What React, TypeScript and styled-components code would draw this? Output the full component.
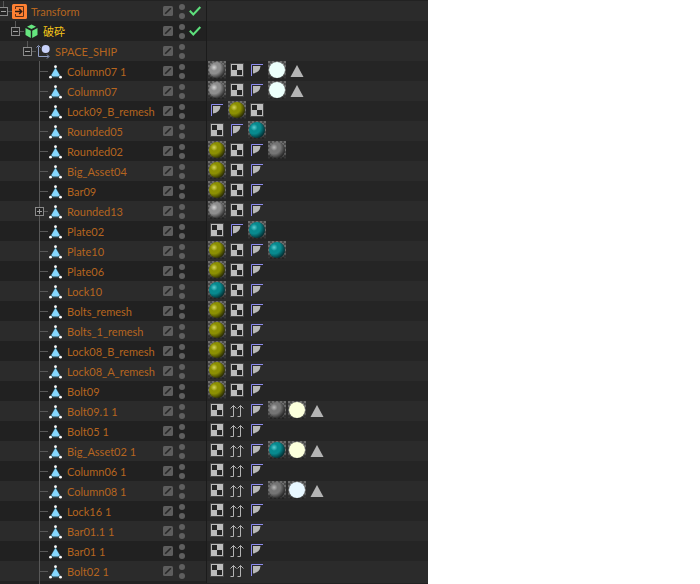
import React from "react";
import styled, { createGlobalStyle } from "styled-components";

const GlobalStyle = createGlobalStyle`
  * { box-sizing: border-box; }
  body { margin: 0; background: #ffffff; }
`;

const Panel = styled.main`
  width: 100%;
  max-width: 428px;
  padding-top: 1px;
  background: #222222;
  color: #b5651f;
  font: 11px/20px Lato, "Noto Sans CJK JP", sans-serif;
  overflow: hidden;
`;

const List = styled.ul`
  margin: 0;
  padding: 0;
  list-style: none;
`;

const Row = styled.li`
  display: grid;
  grid-template-columns: 162px 14px 12px 18px minmax(0, 1fr);
  height: 20px;
  background: #212121;
  &:nth-child(odd) { background: #2b2b2b; }
`;

const NameCell = styled.div<{ $depth: number }>`
  display: flex;
  min-width: 0;
  padding-left: ${(p) => p.$depth * 12}px;
`;

const Branch = styled.span`
  flex: none;
  width: 12px;
  height: 20px;
  svg { display: block; }
`;

const Toggle = styled.button`
  display: block;
  padding: 0;
  border: 0;
  background: none;
`;

const ObjectIcon = styled.span`
  flex: none;
  width: 19px;
  height: 20px;
  svg { display: block; }
`;

const Name = styled.span<{ $active?: boolean }>`
  white-space: nowrap;
  color: ${(p) => (p.$active ? "#f5c518" : "inherit")};
  line-height: 22px;
`;

const IconButton = styled.button`
  display: block;
  padding: 0;
  border: 0;
  background: none;
  height: 20px;
  svg { display: block; }
`;

const StateCell = styled.span`
  svg { display: block; }
`;

const Tags = styled.div<{ $alt: boolean }>`
  display: flex;
  border-left: 1px solid #1b1b1b;
  padding-left: 1px;
  background: ${(p) => (p.$alt ? "#2b2b2b" : "#252525")};
  svg { display: block; flex: none; }
`;

const ListEnd = styled.div`
  height: 3px;
  padding-left: 39px;
  &::before {
    content: "";
    display: block;
    width: 1px;
    height: 3px;
    background: #585858;
  }
`;

const Defs = styled.svg`
  display: block;
`;

const LINE = "#585858";

type BranchKind = "open" | "closed" | "leaf";

function BranchLines({ kind }: { kind: BranchKind }) {
  return (
    <svg width="12" height="20" shapeRendering="crispEdges" overflow="visible">
      {kind === "open" && <path d="M3 0h1v6h-1zM8 10h4v1h-4z" fill={LINE} />}
      {kind !== "open" && <path d="M3 0h1v20h-1z" fill={LINE} />}
      {kind === "leaf" && <path d="M4 10h8v1h-8z" fill={LINE} />}
      {kind === "closed" && <path d="M8 10h4v1h-4z" fill={LINE} />}
      {kind !== "leaf" && (
        <>
          <rect x="-0.5" y="6.5" width="8" height="8" fill="#242424" stroke="#8a8a8a" />
          <path d="M1 10h5v1h-5z" fill="#a0a0a0" />
          {kind === "closed" && <path d="M3 8h1v5h-1z" fill="#a0a0a0" />}
        </>
      )}
    </svg>
  );
}

type IconKind = "transform" | "fracture" | "null" | "polygon";

function ObjectGlyph({ kind }: { kind: IconKind }) {
  return (
    <svg width="19" height="20" overflow="visible">
      {kind === "transform" && (
        <>
          <rect x="0" y="3" width="15" height="15" rx="1.5" fill="#ff8133" />
          <path d="M3.5 8V5.5H11.5V15.5H3.5V13" fill="none" stroke="#5a2f18" />
          <path d="M3 10.5H9.5M7.2 8L9.7 10.5L7.2 13" fill="none" stroke="#2b1a12" strokeWidth="1.4" />
        </>
      )}
      {kind === "fracture" && (
        <g fill="#66e67f">
          <path d="M7.5 3.5L12 5.8L7.5 8.1L3 5.8Z" />
          <path d="M1.5 7L6.8 9.7V17L1.5 14Z" />
          <path d="M13.5 7L8.2 9.7V17L13.5 14Z" />
        </g>
      )}
      {kind === "null" && (
        <>
          <path d="M2.5 5.5V15.5H12.5M0.5 6.5L2.5 4.5L4.5 6.5M11 13.5L13 15.5L11 17.5" fill="none" stroke="#8f9dc4" />
          <circle cx="9.7" cy="8" r="4" fill="#c9d2fb" />
        </>
      )}
      {kind === "polygon" && (
        <>
          <path d="M7.5 6.5L2.5 16H12.5Z" fill="none" stroke="#397080" strokeWidth="0.7" />
          <path d="M7.5 7L11.5 13.8Q11.5 15.5 10 15.5H5Q3.5 15.5 3.5 13.8Z" fill="#86d8ff" />
          <g fill="#ffffff">
            <circle cx="7.5" cy="5.7" r="1.4" />
            <circle cx="2.5" cy="16.2" r="1.4" />
            <circle cx="12.5" cy="16.2" r="1.4" />
          </g>
        </>
      )}
    </svg>
  );
}

const LayerGlyph = () => (
  <svg width="12" height="20">
    <rect x="1" y="5" width="10" height="10" rx="1.5" fill="#5d5d5d" />
    <path d="M3.2 12.8L8.8 7.2" stroke="#262626" strokeWidth="1.6" />
  </svg>
);

const DotsGlyph = () => (
  <svg width="12" height="20" fill="#5f5f5f">
    <circle cx="6" cy="6" r="3" />
    <circle cx="6" cy="15" r="3" />
  </svg>
);

const CheckGlyph = () => (
  <svg width="16" height="20">
    <path d="M1.8 9.8L5.3 13.5L12.3 6" fill="none" stroke="#5de07c" strokeWidth="2" />
  </svg>
);

const spheres: Record<string, [string, string, string]> = {
  g: ["#d6d6d6", "#8e8e8e", "#2c2c2c"],
  d: ["#b8b8b8", "#757575", "#262626"],
  y: ["#d6d65c", "#8c9003", "#2a2c02"],
  t: ["#5ccdd2", "#088a8f", "#022e33"],
};
const glows: Record<string, string> = { w: "#ecfffb", c: "#fbffdc", b: "#e8f7ff" };

function MaterialDefs() {
  return (
    <Defs width="0" height="0" aria-hidden="true">
      <defs>
        <pattern id="backdrop" width="4" height="4" patternUnits="userSpaceOnUse">
          <rect width="4" height="4" fill="#4a4a4a" />
          <path d="M0 0h2v2h-2zM2 2h2v2h-2z" fill="#6c6c6c" />
        </pattern>
        <linearGradient id="floor" x1="0" y1="0" x2="0" y2="1">
          <stop offset="0.6" stopColor="#111" stopOpacity="0" />
          <stop offset="1" stopColor="#111" stopOpacity="0.75" />
        </linearGradient>
        {Object.entries(spheres).map(([key, [light, mid, dark]]) => (
          <radialGradient key={key} id={`ball-${key}`} cx="0.32" cy="0.34" r="0.72">
            <stop offset="0" stopColor={light} />
            <stop offset="0.3" stopColor={mid} />
            <stop offset="0.55" stopColor={mid} />
            <stop offset="1" stopColor={dark} />
          </radialGradient>
        ))}
      </defs>
    </Defs>
  );
}

function Tag({ kind }: { kind: string }) {
  if (kind in spheres || kind in glows) {
    return (
      <svg width="20" height="20">
        <rect width="18" height="18" fill="url(#backdrop)" />
        <rect width="18" height="18" fill="url(#floor)" />
        <circle cx="9" cy="9" r="8" fill={glows[kind] ?? `url(#ball-${kind})`} />
      </svg>
    );
  }
  if (kind === "k") {
    return (
      <svg width="20" height="20" shapeRendering="crispEdges">
        <rect x="2" y="2" width="14" height="14" fill="#444444" />
        <rect x="3" y="3" width="12" height="12" fill="#bdbdbd" />
        <path d="M4 4h5v5h-5zM9 9h5v5h-5z" fill="#242424" />
      </svg>
    );
  }
  if (kind === "p") {
    return (
      <svg width="20" height="20">
        <path d="M3.5 15V3.5H15" fill="none" stroke="#8d8cf0" />
        <path d="M5 5H12.5Q12 11.5 5 12.5Z" fill="#b9b9b9" />
      </svg>
    );
  }
  if (kind === "u") {
    return (
      <svg width="20" height="20" fill="none" stroke="#b4b4b4">
        <path d="M2.5 15.5H5.5V4.5M2.5 7.5L5.5 4.5L8.5 7.5M9.5 15.5H12.5V4.5M9.5 7.5L12.5 4.5L15.5 7.5" />
      </svg>
    );
  }
  return (
    <svg width="20" height="20">
      <path d="M9 4L15.5 16H2.5Z" fill="#b4b4b4" />
    </svg>
  );
}

interface Item {
  name: string;
  tags: string;
  depth?: number;
  icon?: IconKind;
  branch?: BranchKind;
  enabled?: boolean;
  active?: boolean;
}

const items: Item[] = [
  { name: "Transform", tags: "", depth: 0, icon: "transform", branch: "open", enabled: true },
  { name: "破砕", tags: "", depth: 1, icon: "fracture", branch: "open", enabled: true, active: true },
  { name: "SPACE_SHIP", tags: "", depth: 2, icon: "null", branch: "open" },
  { name: "Column07 1", tags: "gkpwa" },
  { name: "Column07", tags: "gkpwa" },
  { name: "Lock09_B_remesh", tags: "pyk" },
  { name: "Rounded05", tags: "kpt" },
  { name: "Rounded02", tags: "ykpd" },
  { name: "Big_Asset04", tags: "ykp" },
  { name: "Bar09", tags: "ykp" },
  { name: "Rounded13", tags: "gkp", branch: "closed" },
  { name: "Plate02", tags: "kpt" },
  { name: "Plate10", tags: "ykpt" },
  { name: "Plate06", tags: "ykp" },
  { name: "Lock10", tags: "tkp" },
  { name: "Bolts_remesh", tags: "ykp" },
  { name: "Bolts_1_remesh", tags: "ykp" },
  { name: "Lock08_B_remesh", tags: "ykp" },
  { name: "Lock08_A_remesh", tags: "ykp" },
  { name: "Bolt09", tags: "ykp" },
  { name: "Bolt09.1 1", tags: "kupdca" },
  { name: "Bolt05 1", tags: "kup" },
  { name: "Big_Asset02 1", tags: "kuptca" },
  { name: "Column06 1", tags: "kup" },
  { name: "Column08 1", tags: "kupdba" },
  { name: "Lock16 1", tags: "kup" },
  { name: "Bar01.1 1", tags: "kup" },
  { name: "Bar01 1", tags: "kup" },
  { name: "Bolt02 1", tags: "kup" },
];

export default function App() {
  return (
    <Panel>
      <GlobalStyle />
      <MaterialDefs />
      <List>
        {items.map(({ name, tags, depth = 3, icon = "polygon", branch = "leaf", enabled, active }, index) => (
          <Row key={name}>
            <NameCell $depth={depth}>
              <Branch>
                {branch === "leaf" ? (
                  <BranchLines kind={branch} />
                ) : (
                  <Toggle aria-label={`Toggle ${name}`} aria-expanded={branch === "open"}>
                    <BranchLines kind={branch} />
                  </Toggle>
                )}
              </Branch>
              <ObjectIcon>
                <ObjectGlyph kind={icon} />
              </ObjectIcon>
              <Name $active={active}>{name}</Name>
            </NameCell>
            <IconButton aria-label={`Layer of ${name}`}>
              <LayerGlyph />
            </IconButton>
            <IconButton aria-label={`Visibility of ${name}`}>
              <DotsGlyph />
            </IconButton>
            <StateCell>{enabled && <CheckGlyph />}</StateCell>
            <Tags $alt={index % 2 === 0}>
              {tags.split("").map((kind, i) => (
                <Tag key={i} kind={kind} />
              ))}
            </Tags>
          </Row>
        ))}
      </List>
      <ListEnd />
    </Panel>
  );
}
